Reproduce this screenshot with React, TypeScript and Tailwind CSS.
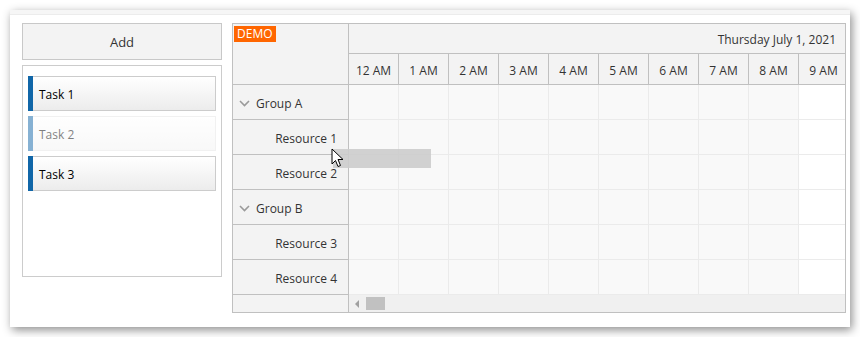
import React from "react";

const hours = ["12 AM", "1 AM", "2 AM", "3 AM", "4 AM", "5 AM", "6 AM", "7 AM", "8 AM", "9 AM"];

const rows = [
    { name: "Group A", group: true },
    { name: "Resource 1", group: false },
    { name: "Resource 2", group: false },
    { name: "Group B", group: true },
    { name: "Resource 3", group: false },
    { name: "Resource 4", group: false },
];

const tasks = [
    { name: "Task 1", faded: false },
    { name: "Task 2", faded: true },
    { name: "Task 3", faded: false },
];

const Chevron = () => (
    <svg width="11" height="7" viewBox="0 0 11 7" className="mr-[6px] -mt-[2px]">
        <path d="M1 1 L5.5 5.5 L10 1" stroke="#9a9a9a" strokeWidth="1.6" fill="none" />
    </svg>
);

const Cursor = () => (
    <svg width="14" height="20" viewBox="0 0 14 20">
        <path d="M1 1 L1 16 L4.5 12.5 L7 18.5 L9.5 17.5 L7 11.5 L12 11.5 Z" fill="#fff" stroke="#000" strokeWidth="1" strokeLinejoin="round" />
    </svg>
);

export default function App() {
    return (
        <div className="w-[860px] h-[337px] bg-white pt-[10px] pl-[10px] font-['Open_Sans',sans-serif] text-[12px] text-[#333]">
            <div className="relative w-[840px] h-[317px] bg-white shadow-[2px_3px_9px_rgba(0,0,0,0.45)]">
                <div className="h-[5px] bg-[#f6f6f6] border-b border-[#ececec]"></div>
                <div className="flex gap-[10px] pt-[8px] pl-[12px]">
                    {/* TASK LIST */}
                    <div className="w-[200px] flex flex-col gap-[5px]">
                        <div className="h-[37px] flex items-center justify-center bg-[#f3f3f3] border border-[#c8c8c8] pt-[3px] text-[13px] text-[#333]">
                            Add
                        </div>
                        <div className="h-[212px] border border-[#cccccc] px-[5px] pt-[10px] flex flex-col gap-[5px]">
                            {tasks.map((t) => (
                                <div
                                    key={t.name}
                                    className={
                                        t.faded
                                            ? "h-[35px] flex items-center border border-[#e4e4e4] bg-gradient-to-b from-white to-[#f3f3f3] opacity-50"
                                            : "h-[35px] flex items-center border border-[#cccccc] bg-gradient-to-b from-white to-[#ececec]"
                                    }
                                >
                                    <div className="w-[5px] h-[35px] -my-px -ml-px bg-[#1066a8]"></div>
                                    <span className="ml-[6px] mt-[3px] text-black">{t.name}</span>
                                </div>
                            ))}
                        </div>
                    </div>

                    {/* SCHEDULER */}
                    <div className="w-[614px] h-[290px] border border-[#c0c0c0] flex overflow-hidden">
                        <div className="w-[116px] shrink-0 bg-[#f3f3f3] border-r border-[#c0c0c0] flex flex-col">
                            <div className="h-[61px] border-b border-[#c0c0c0]">
                                <span className="inline-block bg-[#ff6600] text-white text-[12px] leading-[16px] px-[3px] mt-[2px] ml-px">DEMO</span>
                            </div>
                            {rows.map((r) =>
                                r.group ? (
                                    <div key={r.name} className="h-[35px] border-b border-[#c0c0c0] flex items-center pl-[6px] pt-[4px] text-[#333]">
                                        <Chevron />
                                        {r.name}
                                    </div>
                                ) : (
                                    <div key={r.name} className="h-[35px] border-b border-[#c0c0c0] flex items-center justify-end pr-[11px] pt-[4px] text-[#333]">
                                        {r.name}
                                    </div>
                                )
                            )}
                            <div className="flex-1"></div>
                        </div>

                        <div className="flex-1 flex flex-col overflow-hidden">
                            <div className="h-[30px] shrink-0 bg-[#f3f3f3] border-b border-[#c0c0c0] flex items-center justify-end pr-[9px] pt-[3px] text-[#333]">
                                Thursday July 1, 2021
                            </div>
                            <div className="h-[31px] shrink-0 flex bg-[#f3f3f3] border-b border-[#c0c0c0]">
                                {hours.map((h) => (
                                    <div key={h} className="w-[50px] shrink-0 border-r border-[#c0c0c0] flex items-center justify-center pt-[3px] text-[#333]">
                                        {h}
                                    </div>
                                ))}
                            </div>
                            {rows.map((r) => (
                                <div key={r.name} className="h-[35px] shrink-0 flex border-b border-[#ebebeb]">
                                    {hours.map((h, i) => (
                                        <div
                                            key={h}
                                            className={
                                                i === 9
                                                    ? "w-[50px] shrink-0 border-r border-[#ebebeb] bg-white"
                                                    : "w-[50px] shrink-0 border-r border-[#ebebeb] bg-[#f9f9f9]"
                                            }
                                        ></div>
                                    ))}
                                </div>
                            ))}
                            <div className="flex-1 bg-[#f0f0f0] flex items-center pl-[6px] gap-[7px]">
                                <div className="w-0 h-0 border-y-[4px] border-y-transparent border-r-[4px] border-r-[#a0a0a0]"></div>
                                <div className="w-[19px] h-[13px] bg-[#c1c1c1]"></div>
                            </div>
                        </div>
                    </div>
                </div>

                {/* DRAG SHADOW */}
                <div className="absolute left-[323px] top-[139px] w-[98px] h-[19px] bg-[#cccccc]/90"></div>
                <div className="absolute left-[321px] top-[138px]">
                    <Cursor />
                </div>
            </div>
        </div>
    );
}
